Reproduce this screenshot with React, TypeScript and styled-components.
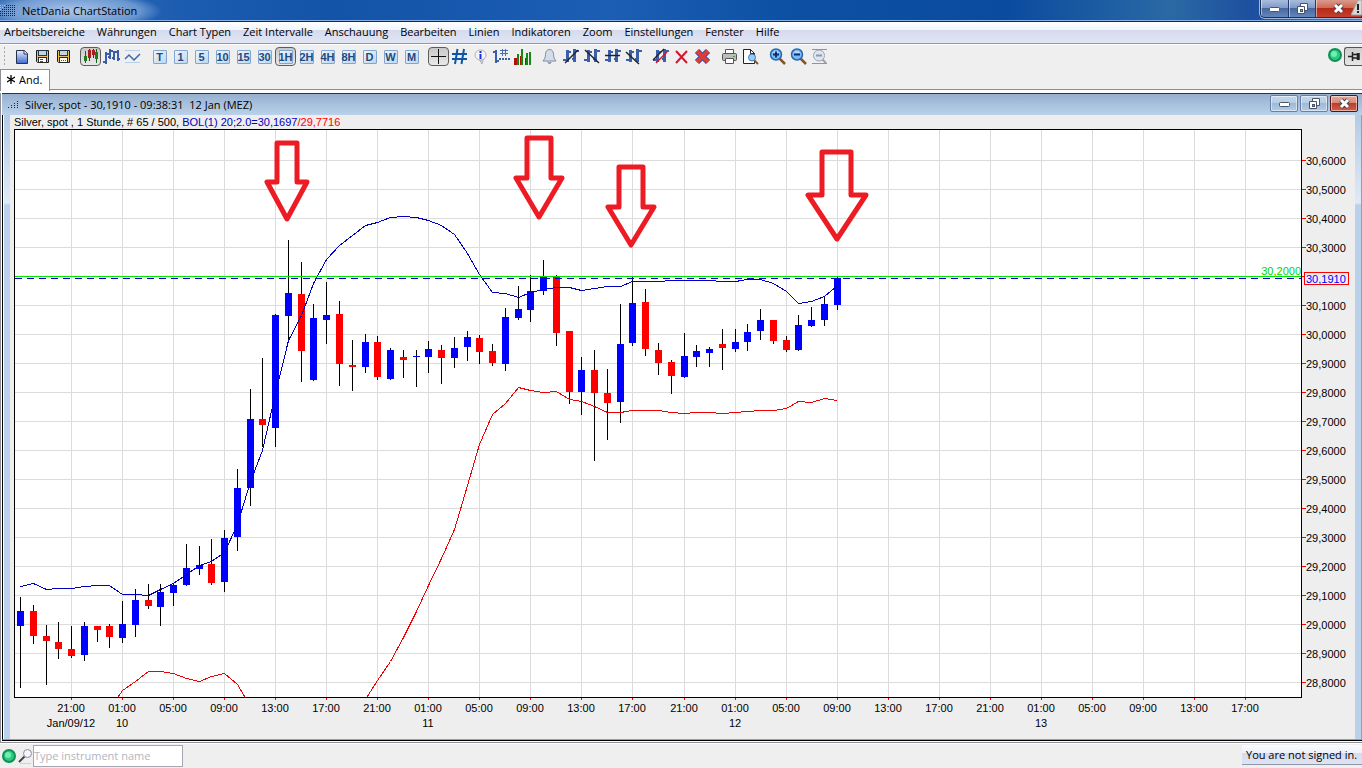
import React from 'react';
import styled, { createGlobalStyle } from 'styled-components';

const ui = `'Open Sans', 'Noto Sans', sans-serif`;
const sans = `'Liberation Sans', Arial, sans-serif`;

const GlobalStyle = createGlobalStyle`
  * { box-sizing: border-box; }
  body { margin: 0; background: #efefef; font-family: ${ui}; font-size: 11px; color: #000; }
  button, input { font: inherit; }
`;

const Page = styled.div`
  display: flex;
  flex-direction: column;
  min-height: 100vh;
  background: #efefef;
`;

/* ---------- application title bar ---------- */

const TitleBar = styled.header`
  position: relative;
  display: flex;
  justify-content: space-between;
  height: 22px;
  background:
    radial-gradient(ellipse 110px 24px at 74px 11px, rgba(200, 220, 246, 0.8), rgba(160, 192, 234, 0.55) 60%, transparent 80%),
    linear-gradient(90deg, #3a70b5 0%, #1b5cb0 14%, #1353a8 24%, #1b5eb4 45%, #0c50a4 58%, #0b4b9f 74%, #2a69a4 86%, #1c4fa0 92%, #5478b4 100%);
  border-bottom: 1px solid #17294b;
  box-shadow: inset 0 -1px 0 #86b0e6;
`;

const AppName = styled.h1`
  display: flex;
  align-items: center;
  gap: 6px;
  margin: 0;
  font-size: 11px;
  font-weight: 400;
`;

const CaptionGroup = styled.div`
  display: flex;
  height: 18px;
  border: 1px solid #1d2f57;
  border-top: 0;
  border-right: 0;
  border-radius: 0 0 0 5px;
  overflow: hidden;
  box-shadow: 0 0 0 1px #9db8de;
`;

const CaptionButton = styled.button<{ $w: number; $close?: boolean }>`
  display: flex;
  align-items: center;
  justify-content: center;
  width: ${p => p.$w}px;
  padding: 0;
  border: 0;
  border-right: 1px solid #26396a;
  background: ${p => p.$close
    ? 'linear-gradient(#d99a8c, #cf6a58 45%, #b52a18 50%, #c4402c)'
    : 'linear-gradient(#a9bcdc, #809bc8 45%, #47699f 50%, #6486bb)'};
  box-shadow: inset 1px 0 0 rgba(255, 255, 255, 0.5);
`;

const Warning = styled.svg`
  position: absolute;
  right: 0;
  top: 0;
`;

/* ---------- menu ---------- */

const MenuBar = styled.nav`
  display: flex;
  gap: 12px;
  height: 22px;
  padding: 0 4px 2px;
  align-items: center;
  background: linear-gradient(#ffffff 0, #f2f5fb 38%, #d5dbee 40%, #e1e6f4 100%);
  border-bottom: 1px solid #9a9a9a;
`;

const MenuLink = styled.a`
  color: #000;
  text-decoration: none;
  line-height: 16px;
  white-space: nowrap;
`;

/* ---------- tool bar ---------- */

const ToolBar = styled.div`
  display: flex;
  align-items: flex-start;
  justify-content: space-between;
  height: 25px;
  padding: 2px 0 0 4px;
  border-top: 1px solid #fff;
`;

const Tools = styled.div`
  display: flex;
  gap: 6px;
`;

const Grip = styled.svg`
  width: 1px;
  height: 20px;
`;

const ToolGroup = styled.div`
  display: flex;
`;

const ToolButton = styled.button<{ $on?: boolean }>`
  display: flex;
  align-items: center;
  justify-content: center;
  width: 21px;
  height: 19px;
  padding: 0;
  border: ${p => (p.$on ? '1px solid #5c5c5c' : '0')};
  border-radius: 4px;
  background: ${p => (p.$on ? 'linear-gradient(#c8c8c8, #e9e9e9)' : 'none')};
`;

const PeriodLabel = styled.span`
  display: flex;
  align-items: center;
  justify-content: center;
  width: 14px;
  height: 14px;
  border: 1px solid #7fa6d0;
  border-radius: 1px;
  background: linear-gradient(135deg, #eef6fd, #bcd7f0);
  color: #23497f;
  font: bold 11px/12px ${sans};
`;

const Status = styled.div`
  display: flex;
  align-items: flex-start;
  gap: 1px;
`;

const PinButton = styled.button`
  display: flex;
  align-items: center;
  justify-content: center;
  width: 18px;
  height: 19px;
  padding: 0;
  border: 1px solid #555;
  border-right: 0;
  border-radius: 3px 0 0 3px;
  background: linear-gradient(#cfcfcf, #e6e6e6);
`;

/* ---------- workspace tabs ---------- */

const TabStrip = styled.div`
  display: flex;
  height: 24px;
  background: linear-gradient(#efefef 20px, #8e8e98 20px, #8e8e98 21px, #fff 21px);
`;

const Tab = styled.button`
  display: flex;
  align-items: center;
  gap: 4px;
  width: 50px;
  height: 22px;
  padding: 0 0 3px 6px;
  border: 1px solid #8e8e98;
  border-bottom: 0;
  background: #fff;
`;

/* ---------- chart window ---------- */

const Workspace = styled.main`
  flex: 1;
  padding-left: 1px;
  border-left: 1px solid #8e8e98;
  border-bottom: 1px solid #8e8e98;
  background: #fff;
`;

const ChartWindow = styled.section`
  margin-bottom: 1px;
  border-top: 1px solid #333;
  border-bottom: 1px solid #000;
`;

const ChartTitle = styled.header`
  display: flex;
  align-items: flex-start;
  justify-content: space-between;
  height: 21px;
  padding: 1px 4px 0 6px;
  background: linear-gradient(#97b0cf, #b9d1ea);
`;

const ChartName = styled.h2`
  display: flex;
  align-items: center;
  gap: 5px;
  margin: 0;
  height: 19px;
  font-size: 11px;
  font-weight: 400;
  white-space: pre;
`;

const WindowButtons = styled.div`
  display: flex;
  gap: 2px;
`;

const WindowButton = styled.button<{ $close?: boolean }>`
  display: flex;
  align-items: center;
  justify-content: center;
  width: 28px;
  height: 17px;
  padding: 0;
  border: 1px solid ${p => (p.$close ? '#4b1620' : '#6580a5')};
  border-radius: 2px;
  background: ${p => p.$close
    ? 'linear-gradient(#e6aa9c, #d98776 48%, #bf3d26 50%, #d0604a)'
    : 'linear-gradient(#c4d8ec, #b6cde6 48%, #9fbad8 50%, #b3cce6)'};
  box-shadow: inset 0 0 0 1px rgba(255, 255, 255, 0.5);
`;

const ChartFrame = styled.div`
  display: flex;
  border-left: 1px solid #000;
  border-right: 1px solid #35c4ea;
  border-bottom: 1px solid #35c4ea;
`;

const Band = styled.div<{ $left?: boolean }>`
  flex: none;
  width: ${p => (p.$left ? 7 : 6)}px;
  border-left: ${p => (p.$left ? '1px solid #fff' : '0')};
  background: linear-gradient(#b4cbe6 0, #dfeaf7 88px, #b9d1ea 90px);
`;

const ChartBody = styled.div`
  flex: 1;
  min-width: 0;
  background: #eeeeee;
`;

const Legend = styled.p`
  margin: 0;
  padding-left: 4px;
  height: 14px;
  font: 11px/14px ${sans};
  white-space: pre;
`;

const Ink = styled.span<{ $c: string }>`
  color: ${p => p.$c};
`;

const Plot = styled.svg`
  display: block;
  width: 100%;
  height: auto;
  font: 11px ${sans};
`;

/* ---------- status bar ---------- */

const StatusBar = styled.footer`
  display: flex;
  align-items: flex-start;
  justify-content: space-between;
  height: 25px;
  padding: 1px 0 0 1px;
  border-top: 1px solid #fff;
`;

const Search = styled.label`
  display: flex;
  align-items: center;
`;

const SearchInput = styled.input`
  width: 150px;
  height: 22px;
  padding: 0 0 1px 0;
  border: 1px solid #a6a6b0;
  background: #fff;
  &::placeholder { color: #b4b4bc; opacity: 1; }
`;

const SignIn = styled.div`
  width: 120px;
  height: 20px;
  padding-left: 4px;
  line-height: 19px;
  background: linear-gradient(#fafbfe, #eef1f9 40%, #d5dbee 42%, #dfe4f3);
  border-bottom: 1px solid #8f96a8;
`;

/* ---------- chart data ---------- */

type Candle = [high: number, top: number, bottom: number, low: number, up: 0 | 1];

const candles: Candle[] = [
  [597, 611, 626, 688, 1], [605, 611, 636, 644, 0], [625, 636, 641, 685, 0], [622, 642, 649, 659, 0],
  [626, 649, 656, 658, 0], [622, 626, 655, 661, 1], [626, 626, 630, 642, 0], [624, 626, 637, 648, 0],
  [601, 624, 638, 643, 1], [589, 600, 625, 637, 1], [584, 600, 606, 609, 0], [584, 592, 607, 626, 1],
  [583, 585, 593, 606, 1], [544, 568, 585, 586, 1], [546, 565, 569, 575, 1], [539, 564, 583, 585, 0],
  [530, 538, 582, 592, 1], [469, 488, 537, 551, 1], [389, 419, 488, 506, 1], [358, 419, 425, 447, 0],
  [314, 315, 428, 447, 1], [240, 293, 316, 340, 1], [262, 294, 351, 382, 0], [304, 318, 380, 381, 1],
  [282, 315, 320, 344, 1], [301, 314, 364, 386, 0], [340, 365, 367, 391, 0], [334, 342, 367, 373, 1],
  [336, 342, 377, 380, 0], [348, 350, 379, 380, 1], [350, 357, 360, 378, 0], [350, 356, 357, 387, 1],
  [341, 349, 357, 373, 1], [345, 350, 358, 384, 0], [337, 348, 358, 368, 1], [331, 337, 347, 361, 1],
  [335, 338, 352, 364, 0], [344, 351, 363, 366, 0], [308, 317, 364, 371, 1], [286, 309, 318, 320, 1],
  [275, 291, 310, 322, 1], [260, 276, 291, 295, 1], [275, 276, 333, 346, 0], [331, 331, 392, 404, 0],
  [357, 370, 392, 415, 1], [350, 370, 393, 461, 0], [369, 393, 403, 440, 0], [304, 344, 402, 423, 1],
  [277, 303, 343, 346, 1], [289, 302, 349, 356, 0], [343, 350, 363, 375, 0], [360, 362, 376, 394, 0],
  [333, 356, 377, 378, 1], [345, 351, 357, 367, 1], [347, 349, 353, 367, 1], [329, 344, 348, 370, 0],
  [329, 342, 349, 352, 1], [324, 332, 342, 351, 1], [309, 320, 331, 340, 1], [320, 320, 341, 344, 0],
  [336, 340, 350, 352, 0], [315, 325, 350, 351, 1], [307, 320, 326, 327, 1], [297, 304, 320, 326, 1],
  [277, 278, 305, 310, 1],
];

const upperBand = [
  586, 583, 589, 588, 588, 586, 585, 585, 594, 594, 595, 589, 583, 574, 565, 561, 552, 524, 481, 450,
  393, 340, 315, 283, 259, 245, 235, 225, 222, 217, 216, 217, 220, 225, 234, 253, 274, 292, 293, 297,
  292, 289, 287, 287, 290, 288, 286, 286, 281, 281, 281, 280, 280, 280, 280, 281, 281, 279, 279, 283,
  291, 303, 301, 296, 285,
];

const lowerBandStart = [690, 681, 671, 671, 673, 678, 681, 676, 673, 684];
const lowerBandEnd = [
  680, 661, 637, 611, 585, 558, 529, 485, 444, 414, 403, 387, 390, 392, 391, 399, 401, 406, 412, 412,
  410, 410, 410, 412, 413, 412, 412, 413, 412, 411, 410, 410, 408, 401, 402, 398, 400,
];

const barX = (i: number) => Math.floor(20.5 + 12.76 * i);
const points = (values: number[], first: number) =>
  values.map((y, i) => `${barX(first + i) + 0.5},${y + 0.5}`).join(' ');

const hours = ['21:00', '01:00', '05:00', '09:00', '13:00', '17:00'];
const ticks = Array.from({ length: 24 }, (_, k) => ({ x: barX(4 + 4 * k), label: hours[k % 6] }));
const days: [number, string][] = [[4, 'Jan/09/12'], [8, '10'], [32, '11'], [56, '12'], [80, '13']];
const prices = Array.from({ length: 19 }, (_, k) => ({
  y: 160 + 29 * k,
  label: (30.6 - k / 10).toFixed(4).replace('.', ','),
}));

const arrows = [
  { l: 277, r: 297, top: 143, neck: 182, hl: 267, hr: 307, cx: 287, tip: 219 },
  { l: 527, r: 551, top: 138, neck: 178, hl: 516, hr: 562, cx: 539, tip: 217 },
  { l: 619, r: 643, top: 167, neck: 207, hl: 608, hr: 654, cx: 631, tip: 245 },
  { l: 822, r: 851, top: 152, neck: 195, hl: 808, hr: 866, cx: 837, tip: 239 },
];

function Chart() {
  return (
    <Plot viewBox="10 129 1345 610" role="img" aria-label="Silver, spot hourly candles">
      <rect x="14" y="129" width="1288" height="569" fill="#fff" />
      <g stroke="#dcdcdc" shapeRendering="crispEdges">
        {prices.map(p => <line key={p.y} x1="15" x2="1301" y1={p.y + 0.5} y2={p.y + 0.5} />)}
        {ticks.map(t => <line key={t.x} x1={t.x + 0.5} x2={t.x + 0.5} y1="130" y2="697" />)}
      </g>
      <g shapeRendering="crispEdges">
        {candles.map(([h, t, b, l, up], i) => {
          const x = barX(i);
          return (
            <g key={x}>
              <rect x={x} y={h} width="1" height={l - h} fill="#000" />
              <rect x={x - 3} y={t} width="7" height={b - t} fill={up ? '#0000ff' : '#ff0000'} />
            </g>
          );
        })}
      </g>
      <g fill="none" shapeRendering="crispEdges">
        <polyline points={points(upperBand, 0)} stroke="#0000c0" />
        <polyline points={`118,697 ${points(lowerBandStart, 8)} 245,697`} stroke="#f00000" />
        <polyline points={`367,697 ${points(lowerBandEnd, 28)}`} stroke="#f00000" />
        <line x1="15" x2="1301" y1="278.5" y2="278.5" stroke="#0000e0" strokeDasharray="7 5" />
        <line x1="15" x2="1301" y1="276.5" y2="276.5" stroke="#00e400" />
        <rect x="14.5" y="129.5" width="1287" height="568" stroke="#000" />
      </g>
      <g fill="none" stroke="#ed1c24" strokeWidth="5" strokeLinejoin="round">
        {arrows.map(a => (
          <path key={a.cx} d={`M${a.l} ${a.top}H${a.r}V${a.neck}H${a.hr}L${a.cx} ${a.tip}L${a.hl} ${a.neck}H${a.l}Z`} />
        ))}
      </g>
      <g stroke="#ff0000" shapeRendering="crispEdges">
        {prices.map(p => <line key={p.y} x1="1302" x2="1306" y1={p.y + 0.5} y2={p.y + 0.5} />)}
        {ticks.map(t => <line key={t.x} x1={t.x + 0.5} x2={t.x + 0.5} y1="698" y2="700" />)}
      </g>
      {prices.filter(p => p.y !== 276).map(p => <text key={p.y} x="1306" y={p.y + 5}>{p.label}</text>)}
      <text x="1301" y="275" textAnchor="end" fill="#00d800">30,2000</text>
      <rect x="1304.5" y="272.5" width="44" height="12" fill="#eeeeee" stroke="#ff0000" shapeRendering="crispEdges" />
      <text x="1306" y="283" fill="#0000ff">30,1910</text>
      <g textAnchor="middle">
        {ticks.map(t => <text key={t.x} x={t.x} y="712">{t.label}</text>)}
        {days.map(([i, label]) => <text key={label} x={barX(i)} y="727">{label}</text>)}
      </g>
    </Plot>
  );
}

/* ---------- icons ---------- */

const IconBox = styled.svg`
  flex: none;
  width: 17px;
  height: 17px;
`;

const Icon = ({ children }: { children: React.ReactNode }) => (
  <IconBox viewBox="0 0 17 17" aria-hidden="true">{children}</IconBox>
);

const Dots = ({ cols, rows, step }: { cols: number; rows: number; step: number }) => (
  <svg width={cols * step} height={rows * 2} shapeRendering="crispEdges" aria-hidden="true">
    {Array.from({ length: cols * rows }, (_, n) => {
      const c = n % cols;
      const r = Math.floor(n / cols);
      return <rect key={n} x={c * step} y={r * 2} width="1" height="1" fill={c + r < 3 ? '#c9c0a4' : '#1c2530'} />;
    })}
  </svg>
);

const Floppy = ({ as }: { as?: boolean }) => (
  <Icon>
    <path d="M2.500 2.500h12v12h-11l-1-1z" fill="#e8c060" stroke="#1c1c1c" />
    <rect x="4" y="2" width="9" height="6" fill="#26364a" />
    <rect x="5" y="3" width="7" height="4" fill="#c3d4e6" />
    <rect x="4" y="9" width="9" height="6" fill="#2a2a2a" />
    <rect x="5" y="10" width="7" height="4" fill="#fff" />
    {as
      ? <path d="M6 12.500h1m1 0h1m1 0h1" stroke="#2b50c0" />
      : <path d="M6 11.500h3m-3 2h3" stroke="#555" />}
  </Icon>
);

const Bars = ({ children }: { children?: React.ReactNode }) => (
  <Icon>
    <g stroke="#3b5ea8" fill="none">
      <path d="M5.500 2v12M12.500 1v13" strokeWidth="3" />
      <path d="M1 12h4M6 4h3M10 11h3M13 3h4" strokeWidth="2" />
    </g>
    {children}
  </Icon>
);

const Slash = ({ d, c = '#20242c' }: { d: string; c?: string }) => <path d={d} stroke={c} strokeWidth="1.500" fill="none" />;

const Lens = ({ mark }: { mark: string }) => (
  <Icon>
    <path d="M10.500 10.500l5.500 5.500" stroke="#8a5524" strokeWidth="2.500" />
    <circle cx="7" cy="6.500" r="5.500" fill="#7db9f2" stroke="#2468b8" strokeWidth="1.500" />
    <path d="M3.500 5a4 4 0 0 1 7 0" fill="#b8dbfb" />
    <path d={mark} stroke="#0d2f78" strokeWidth="2" />
  </Icon>
);

const Led = () => (
  <svg width="16" height="16" viewBox="0 0 16 16" aria-hidden="true">
    <circle cx="8" cy="8" r="6" fill="#2fc980" stroke="#109055" strokeWidth="2" />
    <circle cx="7" cy="7" r="3" fill="#6bf0b0" />
  </svg>
);

const Minimize = () => (
  <svg width="13" height="6" viewBox="0 0 13 6"><rect x="1.500" y="1.500" width="10" height="4" rx="1" fill="#fff" stroke="#4a5468" /></svg>
);
const Restore = () => (
  <svg width="13" height="13" viewBox="0 0 13 13">
    <path d="M4.500 1.500h7v7h-7z" fill="#fff" stroke="#4a5468" />
    <path d="M1.500 4.500h7v7h-7z" fill="#fff" stroke="#4a5468" />
    <rect x="4.500" y="7.500" width="2" height="2" fill="#7f9ac0" stroke="#4a5468" />
  </svg>
);
const Cross = () => (
  <svg width="13" height="11" viewBox="0 0 13 11">
    <path d="M3 2l7 7M10 2l-7 7" stroke="#4a4050" strokeWidth="5" />
    <path d="M3 2l7 7M10 2l-7 7" stroke="#fff" strokeWidth="3" />
  </svg>
);

const fileTools = [
  ['Neu', <Icon key="n"><defs><linearGradient id="doc" x1="0" y1="0" x2="0" y2="1"><stop offset="0" stopColor="#eaf1ff" /><stop offset="1" stopColor="#3d68cc" /></linearGradient></defs><path d="M3.500 2.500h8l3 3v10h-11z" fill="url(#doc)" stroke="#26324c" /><path d="M11 2.500V6h3.500" fill="#fff" stroke="#26324c" /></Icon>],
  ['Speichern', <Floppy key="s" />],
  ['Speichern unter', <Floppy key="a" as />],
] as const;

const typeTools = [
  ['Kerzen', <Icon key="k"><path d="M3.500 3v12M14.500 1v14" stroke="#156015" /><path d="M2 8h3v5H2zM13 4h3v7h-3z" fill="#1d7a1d" /><path d="M7.500 1v12M11.500 1v9" stroke="#7a1515" /><path d="M6 2h3v8H6zM10 2h3v5h-3z" fill="#a81e1e" /></Icon>],
  ['Balken', <Icon key="b"><path d="M3 4v12M0 14h3M3 6h3M7 1v10M7 3h3M5 9h2M11 3v9M9 10h2M11 4h4M15 2v11M15 11h2" stroke="#3b5ea8" strokeWidth="2" fill="none" /></Icon>],
  ['Linie', <Icon key="l"><path d="M1 2.500h15M1 14.500h15" stroke="#b9d0e8" /><path d="M1 11l4-4 5 5 6-6" fill="none" stroke="#3a68ae" strokeWidth="1.500" /></Icon>],
] as const;

const periods = ['T', '1', '5', '10', '15', '30', '1H', '2H', '4H', '8H', 'D', 'W', 'M'];

const viewTools = [
  ['Fadenkreuz', <Icon key="f"><path d="M8.500 1v15M1 8.500h15" stroke="#111" /></Icon>],
  ['Gitter', <Icon key="g"><path d="M6.500 1L4 16M13 1l-2.500 15M1 6h15M1 11h15" stroke="#0d55a8" strokeWidth="2" /></Icon>],
  ['Info', <Icon key="i"><path d="M7 11l3 5 1.500-5z" fill="#d0d0d6" stroke="#b0b0b8" /><ellipse cx="8.500" cy="7" rx="5.500" ry="5" fill="#f4f4f8" stroke="#b0b0b8" /><path d="M8.500 3v2m0 1v5" stroke="#1f2fe0" strokeWidth="2" /></Icon>],
  ['Werte', <Icon key="w"><path d="M3 2v13M0 4h3M3 13h3" stroke="#3b5ea8" strokeWidth="2" /><path d="M9.500 1v7M12.500 1v7M7 2.500h8M7 5.500h8" stroke="#4a6cb4" /><path d="M6 11h11" stroke="#3b5ea8" strokeDasharray="2 1" strokeWidth="2" /></Icon>],
  ['Volumen', <Icon key="v"><path d="M0 10h3v7H0zM6 8h2v9H6zM11 10h2v7h-2z" fill="#b01010" /><path d="M3 6h2v11H3zM7 1h2v16H7zM12 5h2v12h-2zM15 4h2v13h-2z" fill="#138a13" /></Icon>],
] as const;

const lineTools = [
  ['Alarm', <Icon key="a"><path d="M8.500 1.500c-3 0-4 2.500-4 5 0 3-1 4.500-2.500 6.500h13c-1.500-2-2.500-3.500-2.500-6.500 0-2.500-1-5-4-5z" fill="#d3dcea" stroke="#7d8aa0" /><path d="M7 14a1.500 1.500 0 0 0 3 0" fill="#9aa6bb" stroke="#7d8aa0" /></Icon>],
  ['Trendlinie', <Bars key="t"><Slash d="M3 15L16 2" /></Bars>],
  ['Fallende Linie', <Bars key="f"><Slash d="M2 2l14 13" /></Bars>],
  ['Horizontale Linie', <Bars key="h"><Slash d="M1 7.500h15" /></Bars>],
  ['Strahl', <Bars key="s"><Slash d="M1 4l13 12" /></Bars>],
] as const;

const deleteTools = [
  ['Linie entfernen', <Bars key="a"><Slash d="M1 12L12 1" /><Slash d="M4 15L15 4" c="#d41430" /></Bars>],
  ['Entfernen', <Icon key="b"><path d="M3 3l11 12M14 3L3 15" stroke="#d8142e" strokeWidth="2" /></Icon>],
  ['Alle entfernen', <Icon key="c"><path d="M3 3l11 11M14 3L3 14" stroke="#2d50a0" strokeWidth="6" /><path d="M3 3l11 11M14 3L3 14" stroke="#d83c3c" strokeWidth="4" /></Icon>],
] as const;

const printTools = [
  ['Drucken', <Icon key="a"><path d="M4.500 1.500h8v5h-8z" fill="#fff" stroke="#555" /><rect x="1.500" y="5.500" width="14" height="7" rx="1" fill="#b9bfb8" stroke="#555" /><path d="M4.500 10.500h8v5h-8z" fill="#fff" stroke="#555" /><path d="M12 8.500h2" stroke="#3a3" /></Icon>],
  ['Seitenansicht', <Icon key="b"><path d="M1.500 1.500h7l4 4v10h-11z" fill="#fff" stroke="#222" /><path d="M8.500 1.500v4h4" fill="none" stroke="#222" /><path d="M12 12l4 4" stroke="#8a5524" strokeWidth="2" /><circle cx="10" cy="9.500" r="3.500" fill="#9ccbf2" stroke="#3b78b8" /></Icon>],
] as const;

const zoomTools = [
  ['Vergrössern', <Lens key="a" mark="M4 6.500h6M7 3.500v6" />],
  ['Verkleinern', <Lens key="b" mark="M4 6.500h6" />],
  ['Zoom zurücksetzen', <Icon key="c"><path d="M1 1.500h15M1 15.500h15" stroke="#8d949e" /><path d="M11 11l4 4" stroke="#9aa0a8" strokeWidth="2" /><circle cx="8" cy="7.500" r="5.500" fill="#dfe4ee" stroke="#98a4bc" /><path d="M5 7.500h6" stroke="#8a97b4" strokeWidth="2" /></Icon>],
] as const;

function Group({ items, on }: { items: readonly (readonly [string, React.ReactNode])[]; on?: number }) {
  return (
    <ToolGroup>
      {items.map(([label, icon], i) => (
        <ToolButton key={label} aria-label={label} aria-pressed={i === on} $on={i === on}>{icon}</ToolButton>
      ))}
    </ToolGroup>
  );
}

const menu = ['Arbeitsbereiche', 'Währungen', 'Chart Typen', 'Zeit Intervalle', 'Anschauung', 'Bearbeiten',
  'Linien', 'Indikatoren', 'Zoom', 'Einstellungen', 'Fenster', 'Hilfe'];

export default function App() {
  return (
    <Page>
      <GlobalStyle />
      <TitleBar>
        <AppName><Dots cols={8} rows={6} step={2} />NetDania ChartStation</AppName>
        <CaptionGroup>
          <CaptionButton $w={28} aria-label="Minimieren"><Minimize /></CaptionButton>
          <CaptionButton $w={27} aria-label="Wiederherstellen"><Restore /></CaptionButton>
          <CaptionButton $w={46} $close aria-label="Schliessen"><Cross /></CaptionButton>
        </CaptionGroup>
        <Warning width="11" height="16" viewBox="0 0 11 16" aria-hidden="true">
          <path d="M7 0L0 15h11V0z" fill="#d8d8d8" stroke="#a0a0a0" />
          <path d="M7 4v6m0 1v2" stroke="#222" strokeWidth="2" />
        </Warning>
      </TitleBar>
      <MenuBar aria-label="Hauptmenü">
        {menu.map(m => <MenuLink key={m} href="#">{m}</MenuLink>)}
      </MenuBar>
      <ToolBar role="toolbar">
        <Tools>
          <Grip shapeRendering="crispEdges" aria-hidden="true">
            {[0, 4, 8, 12, 16].map(y => <rect key={y} y={y} width="1" height="2" fill="#a8a8a8" />)}
          </Grip>
          <Group items={fileTools} />
          <Group items={typeTools} on={0} />
          <ToolGroup>
            {periods.map(p => (
              <ToolButton key={p} $on={p === '1H'} aria-pressed={p === '1H'}><PeriodLabel>{p}</PeriodLabel></ToolButton>
            ))}
          </ToolGroup>
          <Group items={viewTools} on={0} />
          <Group items={lineTools} />
          <Group items={deleteTools} />
          <Group items={printTools} />
          <Group items={zoomTools} />
        </Tools>
        <Status>
          <Led />
          <PinButton aria-label="Anheften">
            <svg width="12" height="11" viewBox="0 0 12 11"><path d="M0 5.500h4M4.500 1v9M5 3.500h4M9.500 2v7M5 7h4M11 2v7" stroke="#222" strokeWidth="1.500" /></svg>
          </PinButton>
        </Status>
      </ToolBar>
      <TabStrip role="tablist">
        <Tab role="tab" aria-selected="true">
          <svg width="8" height="9" viewBox="0 0 8 9" aria-hidden="true"><path d="M4 0v9M0 2l8 5M8 2L0 7" stroke="#000" strokeWidth="1.300" /></svg>
          And.
        </Tab>
      </TabStrip>
      <Workspace>
        <ChartWindow>
          <ChartTitle>
            <ChartName><Dots cols={4} rows={4} step={3} />{'Silver, spot - 30,1910 - 09:38:31  12 Jan (MEZ)'}</ChartName>
            <WindowButtons>
              <WindowButton aria-label="Minimieren"><Minimize /></WindowButton>
              <WindowButton aria-label="Wiederherstellen"><Restore /></WindowButton>
              <WindowButton $close aria-label="Schliessen"><Cross /></WindowButton>
            </WindowButtons>
          </ChartTitle>
          <ChartFrame>
            <Band $left />
            <ChartBody>
              <Legend>
                Silver, spot , 1 Stunde, # 65 / 500, <Ink $c="#0000c0">BOL(1) 20;2.0=30,1697</Ink><Ink $c="#ff0000">/29,7716</Ink>
              </Legend>
              <Chart />
            </ChartBody>
            <Band />
          </ChartFrame>
        </ChartWindow>
      </Workspace>
      <StatusBar>
        <Search>
          <Led />
          <svg width="16" height="16" viewBox="0 0 16 16" aria-hidden="true">
            <path d="M2 14l6-6" stroke="#444" strokeWidth="2" /><circle cx="10.500" cy="5.500" r="4" fill="#f4f6fa" stroke="#8c8c94" /><path d="M3 15.500h11" stroke="#d0d0d0" />
          </svg>
          <SearchInput aria-label="Type instrument name" placeholder="Type instrument name" />
        </Search>
        <SignIn>You are not signed in.</SignIn>
      </StatusBar>
    </Page>
  );
}
